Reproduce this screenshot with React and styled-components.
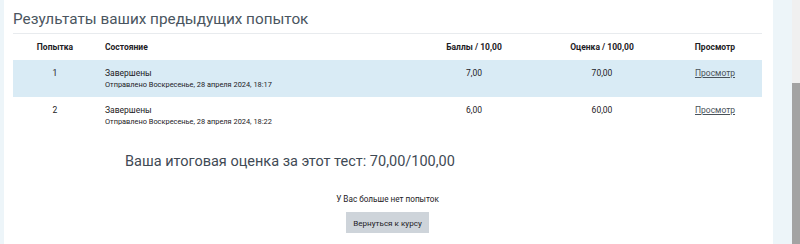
import React from "react";
import styled, { createGlobalStyle } from "styled-components";

const Global = createGlobalStyle`
  html, body { margin: 0; padding: 0; background: #fff; overflow: hidden; }
  body { font-family: Roboto, "Liberation Sans", Arial, sans-serif; color: #1d2125; }
`;

const Page = styled.div`
  display: flex;
  width: 800px;
  height: 244px;
`;

const SideStrip = styled.div`
  width: ${(p) => p.$w}px;
  flex: none;
  background: #edf5f9;
`;

const Main = styled.main`
  flex: 1;
  padding: 0 11px 0 9px;
  display: flex;
  flex-direction: column;
`;

const Scrollbar = styled.div`
  width: 8px;
  flex: none;
  background: #f0f0f0;
  display: flex;
  flex-direction: column;
  padding-top: 83px;
  box-sizing: border-box;
`;

const Thumb = styled.div`
  flex: 1;
  background: #a3a3a3;
`;

const Title = styled.h2`
  margin: 0;
  padding-top: 8px;
  height: 25px;
  box-sizing: content-box;
  font-weight: 400;
  font-size: 15.3px;
  line-height: 22px;
  color: #4a5560;
  border-bottom: 1px solid #e8ebee;
`;

const Table = styled.table`
  width: 100%;
  border-collapse: collapse;
  table-layout: fixed;
`;

const Th = styled.th`
  height: 26px;
  padding: 0;
  font-weight: 700;
  font-size: 8.5px;
  text-align: ${(p) => p.$align || "center"};
  padding-left: ${(p) => (p.$align === "left" ? "8px" : "0")};
  color: #1d2125;
  vertical-align: middle;
`;

const Row = styled.tr`
  background: ${(p) => (p.$shade ? "#d9ebf5" : "transparent")};
  height: ${(p) => p.$h}px;
`;

const Td = styled.td`
  padding: 7px 0 0 ${(p) => (p.$align === "left" ? "8px" : "0")};
  text-align: ${(p) => p.$align || "center"};
  vertical-align: top;
  line-height: 12px;
  font-size: 8.5px;
`;

const Sub = styled.div`
  font-size: 7.4px;
  line-height: 12px;
`;

const Link = styled.a`
  color: #4a525a;
  text-decoration: underline;
`;

const Summary = styled.h3`
  margin: 16px 0 0 112px;
  font-weight: 400;
  font-size: 14.5px;
  line-height: 22px;
  color: #3f4a55;
`;

const Note = styled.p`
  margin: 20px 0 0;
  text-align: center;
  font-size: 8.2px;
  line-height: 12px;
`;

const ButtonRow = styled.div`
  display: flex;
  justify-content: center;
  margin-top: 7px;
`;

const Button = styled.button`
  width: 83px;
  height: 21px;
  border: none;
  background: #ced4da;
  font-family: inherit;
  font-size: 8.1px;
  color: #1d2125;
  padding: 0;
`;

const rows = [
  { n: "1", time: "18:17", score: "7,00", grade: "70,00" },
  { n: "2", time: "18:22", score: "6,00", grade: "60,00" },
];

export default function App() {
  return (
    <>
      <Global />
      <Page>
        <SideStrip $w={4} />
        <Main>
          <Title>Результаты ваших предыдущих попыток</Title>
          <Table>
            <colgroup>
              <col style={{ width: 84 }} />
              <col style={{ width: 315 }} />
              <col style={{ width: 124 }} />
              <col style={{ width: 132 }} />
              <col style={{ width: 94 }} />
            </colgroup>
            <thead>
              <tr>
                <Th>Попытка</Th>
                <Th $align="left">Состояние</Th>
                <Th>Баллы / 10,00</Th>
                <Th>Оценка / 100,00</Th>
                <Th>Просмотр</Th>
              </tr>
            </thead>
            <tbody>
              {rows.map((r, i) => (
                <Row key={r.n} $shade={i === 0} $h={i === 0 ? 37 : 38}>
                  <Td>{r.n}</Td>
                  <Td $align="left">
                    Завершены
                    <Sub>Отправлено Воскресенье, 28 апреля 2024, {r.time}</Sub>
                  </Td>
                  <Td>{r.score}</Td>
                  <Td>{r.grade}</Td>
                  <Td>
                    <Link href="#">Просмотр</Link>
                  </Td>
                </Row>
              ))}
            </tbody>
          </Table>
          <Summary>Ваша итоговая оценка за этот тест: 70,00/100,00</Summary>
          <Note>У Вас больше нет попыток</Note>
          <ButtonRow>
            <Button>Вернуться к курсу</Button>
          </ButtonRow>
        </Main>
        <SideStrip $w={19} />
        <Scrollbar>
          <Thumb />
        </Scrollbar>
      </Page>
    </>
  );
}
